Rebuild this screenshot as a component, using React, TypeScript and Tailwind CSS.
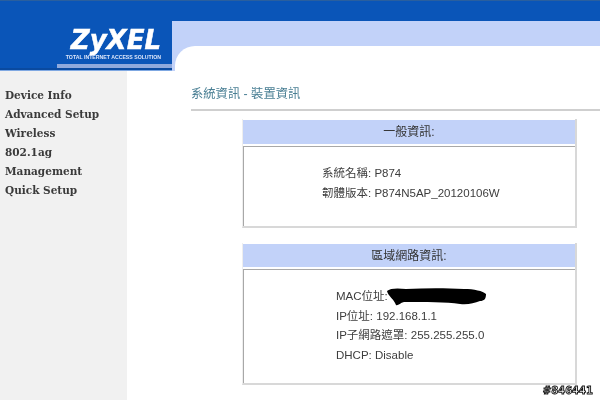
export default function App() {
  return (
    <div className="relative h-[400px] w-[600px] overflow-hidden bg-white font-['Liberation_Sans','Noto_Sans_CJK_TC',sans-serif] text-[#3d3d3d] blur-[0.35px]">
      <header className="flex h-[71px] border-t border-[#2a5f9e] bg-[#0a55b8]">
        <div className="flex w-[172px] flex-col items-end">
          <div className="flex w-[115px] flex-1 flex-col items-end justify-end pr-[11px] pb-[3px]">
            <div className="text-[26px] leading-[24px] font-bold text-white italic font-['DejaVu_Sans','Liberation_Sans',sans-serif] [-webkit-text-stroke:0.5px_#fff]">ZyXEL</div>
            <div className="mt-[2px] text-[5.2px] leading-[7px] font-bold whitespace-nowrap text-[#dfe8fb]">TOTAL INTERNET ACCESS SOLUTION</div>
          </div>
          <div className="h-[4px] w-[115px] bg-[#8fa9dc]" />
          <div className="h-[2px] w-full bg-[#0a4aa0]" />
          <div className="h-[1px] w-full bg-[#7fa8e2]" />
        </div>
        <div className="flex flex-1 flex-col">
          <div className="h-[20px] bg-[#0a55b8]" />
          <div className="flex-1 bg-[#c2d2f9] pt-[25px] pl-[3px]">
            <div className="h-full rounded-tl-[20px] bg-white" />
          </div>
        </div>
      </header>
      <div className="flex h-[329px]">
        <nav className="w-[127px] bg-[#f1f1f1] pt-[15px] pl-[5px] font-['DejaVu_Serif',serif] text-[10.5px] leading-[19px] font-bold text-[#3a3a3a]">
          <div>Device Info</div>
          <div>Advanced Setup</div>
          <div>Wireless</div>
          <div>802.1ag</div>
          <div>Management</div>
          <div>Quick Setup</div>
        </nav>
        <main className="flex-1 pt-[14px] pl-[64px]">
          <h1 className="h-[26px] border-b-2 border-[#cfcfcf] text-[12.3px] leading-[19px] font-normal text-[#4a7f94]">系統資訊 - 裝置資訊</h1>
          <section className="mt-[8px] ml-[51px] w-[335px] border-r-2 border-b-2 border-l border-r-[#d8d8d8] border-b-[#d8d8d8] border-l-[#eeeeee] pt-[1px]">
            <div className="h-[24px] bg-[#c2d2f9] text-center text-[12px] leading-[25px] text-[#333]">一般資訊:</div>
            <div className="mt-[2px] h-[80px] border-t border-l border-[#a8a8a8] pt-[16px] pl-[78px] text-[11.5px] leading-[20px]">
              <div>系統名稱: P874</div>
              <div>韌體版本: P874N5AP_20120106W</div>
            </div>
          </section>
          <section className="mt-[15px] ml-[51px] w-[335px] border-r-2 border-b-2 border-l border-r-[#d8d8d8] border-b-[#d8d8d8] border-l-[#eeeeee] pt-[1px]">
            <div className="h-[23px] bg-[#c2d2f9] text-center text-[12px] leading-[24px] text-[#333]">區域網路資訊:</div>
            <div className="mt-[2px] h-[114px] border-t border-l border-[#a8a8a8] pt-[17px] pl-[92px] text-[11.5px] leading-[19.5px]">
              <div className="relative">
                MAC位址:
                <svg className="absolute top-[1px] left-[50px]" width="100" height="18" viewBox="0 0 100 18">
                  <path d="M1 3 C4 0 12 0 20 1 C40 0 60 0 78 1 C88 1 97 3 100 6 C100 11 98 13 94 13 C88 15 82 17 74 16 C60 14 40 14 18 14 C14 15 12 18 10 17 C8 11 2 8 1 3Z" fill="#000" />
                </svg>
              </div>
              <div>IP位址: 192.168.1.1</div>
              <div>IP子網路遮罩: 255.255.255.0</div>
              <div>DHCP: Disable</div>
            </div>
          </section>
        </main>
      </div>
      <div className="absolute right-[7px] bottom-[3px] font-['DejaVu_Sans',sans-serif] text-[10px] leading-[12px] font-bold text-white [-webkit-text-stroke:0.9px_#111]">#846441</div>
    </div>
  );
}
